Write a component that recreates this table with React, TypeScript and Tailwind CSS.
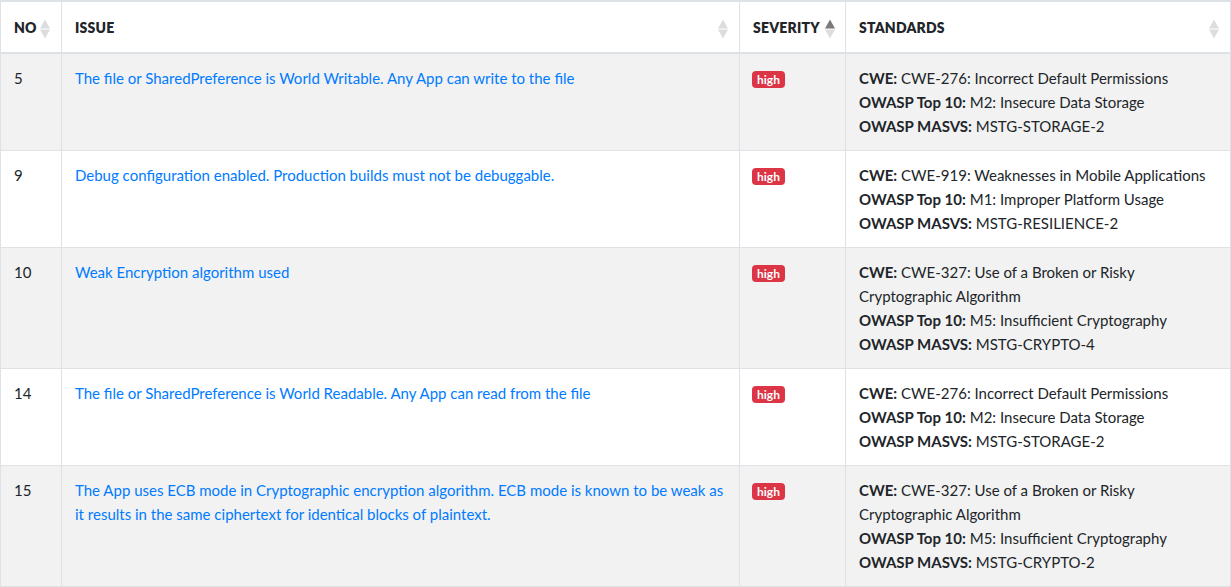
const rows = [
    {
        no: 5,
        issue: 'The file or SharedPreference is World Writable. Any App can write to the file',
        cwe: 'CWE-276: Incorrect Default Permissions',
        top10: 'M2: Insecure Data Storage',
        masvs: 'MSTG-STORAGE-2',
    },
    {
        no: 9,
        issue: 'Debug configuration enabled. Production builds must not be debuggable.',
        cwe: 'CWE-919: Weaknesses in Mobile Applications',
        top10: 'M1: Improper Platform Usage',
        masvs: 'MSTG-RESILIENCE-2',
    },
    {
        no: 10,
        issue: 'Weak Encryption algorithm used',
        cwe: 'CWE-327: Use of a Broken or Risky Cryptographic Algorithm',
        top10: 'M5: Insufficient Cryptography',
        masvs: 'MSTG-CRYPTO-4',
    },
    {
        no: 14,
        issue: 'The file or SharedPreference is World Readable. Any App can read from the file',
        cwe: 'CWE-276: Incorrect Default Permissions',
        top10: 'M2: Insecure Data Storage',
        masvs: 'MSTG-STORAGE-2',
    },
    {
        no: 15,
        issue: 'The App uses ECB mode in Cryptographic encryption algorithm. ECB mode is known to be weak as it results in the same ciphertext for identical blocks of plaintext.',
        cwe: 'CWE-327: Use of a Broken or Risky Cryptographic Algorithm',
        top10: 'M5: Insufficient Cryptography',
        masvs: 'MSTG-CRYPTO-2',
    },
];

// up/down sort arrows like DataTables (diamond shape)
const SortIcon = ({ active }: { active?: boolean }) => (
    <svg width="10" height="20" viewBox="0 0 10 20" className="block">
        <path d="M5 0.5 L10 9.5 L0 9.5 Z" fill={active ? '#7a7a7a' : '#dddddd'} />
        <path d="M5 19.5 L10 10.5 L0 10.5 Z" fill="#dddddd" />
    </svg>
);

const HeadCell = ({ label, width, iconClass, active }: { label: string; width: string; iconClass: string; active?: boolean }) => (
    <th className={`relative ${width} border-x border-[#dee2e6] border-b-2 px-[13px] h-[52px] pt-[1px] text-left align-middle text-[14px] font-extrabold uppercase tracking-[0.2px] text-[#212529]`}>
        {label}
        <span className={`absolute top-[17px] ${iconClass}`}>
            <SortIcon active={active} />
        </span>
    </th>
);

export default function App() {
    return (
        <div className="w-[1231px] h-[587px] overflow-hidden bg-white font-['Lato',sans-serif] text-[15px] text-[#212529]">
            <table className="w-[1230px] table-fixed border-collapse border-t-2 border-[#dee2e6]">
                <thead>
                    <tr>
                        <HeadCell label="No" width="w-[61px]" iconClass="left-[39px]" />
                        <HeadCell label="Issue" width="w-[678px]" iconClass="right-[11px]" />
                        <HeadCell label="Severity" width="w-[106px]" iconClass="left-[85px]" active />
                        <HeadCell label="Standards" width="w-[385px]" iconClass="right-[11px]" />
                    </tr>
                </thead>
                <tbody>
                    {rows.map((r, i) => (
                        <tr key={r.no} className={i % 2 === 0 ? 'bg-[#f2f2f2]' : 'bg-white'}>
                            <td className="border border-[#dee2e6] px-[13px] pt-[12px] pb-[12px] align-top leading-[24px]">{r.no}</td>
                            <td className="border border-[#dee2e6] px-[13px] pt-[12px] pb-[12px] align-top leading-[24px] text-[#007bff]">{r.issue}</td>
                            <td className="border border-[#dee2e6] px-[12px] pt-[12px] pb-[12px] align-top leading-[24px]">
                                <span className="inline-block rounded-[4px] bg-[#dc3545] px-[5px] text-[12px] font-bold leading-[17px] text-white">high</span>
                            </td>
                            <td className="border border-[#dee2e6] px-[13px] pt-[12px] pb-[12px] align-top leading-[24px]">
                                <div><b>CWE:</b> {r.cwe}</div>
                                <div><b>OWASP Top 10:</b> {r.top10}</div>
                                <div><b>OWASP MASVS:</b> {r.masvs}</div>
                            </td>
                        </tr>
                    ))}
                </tbody>
            </table>
        </div>
    );
}
